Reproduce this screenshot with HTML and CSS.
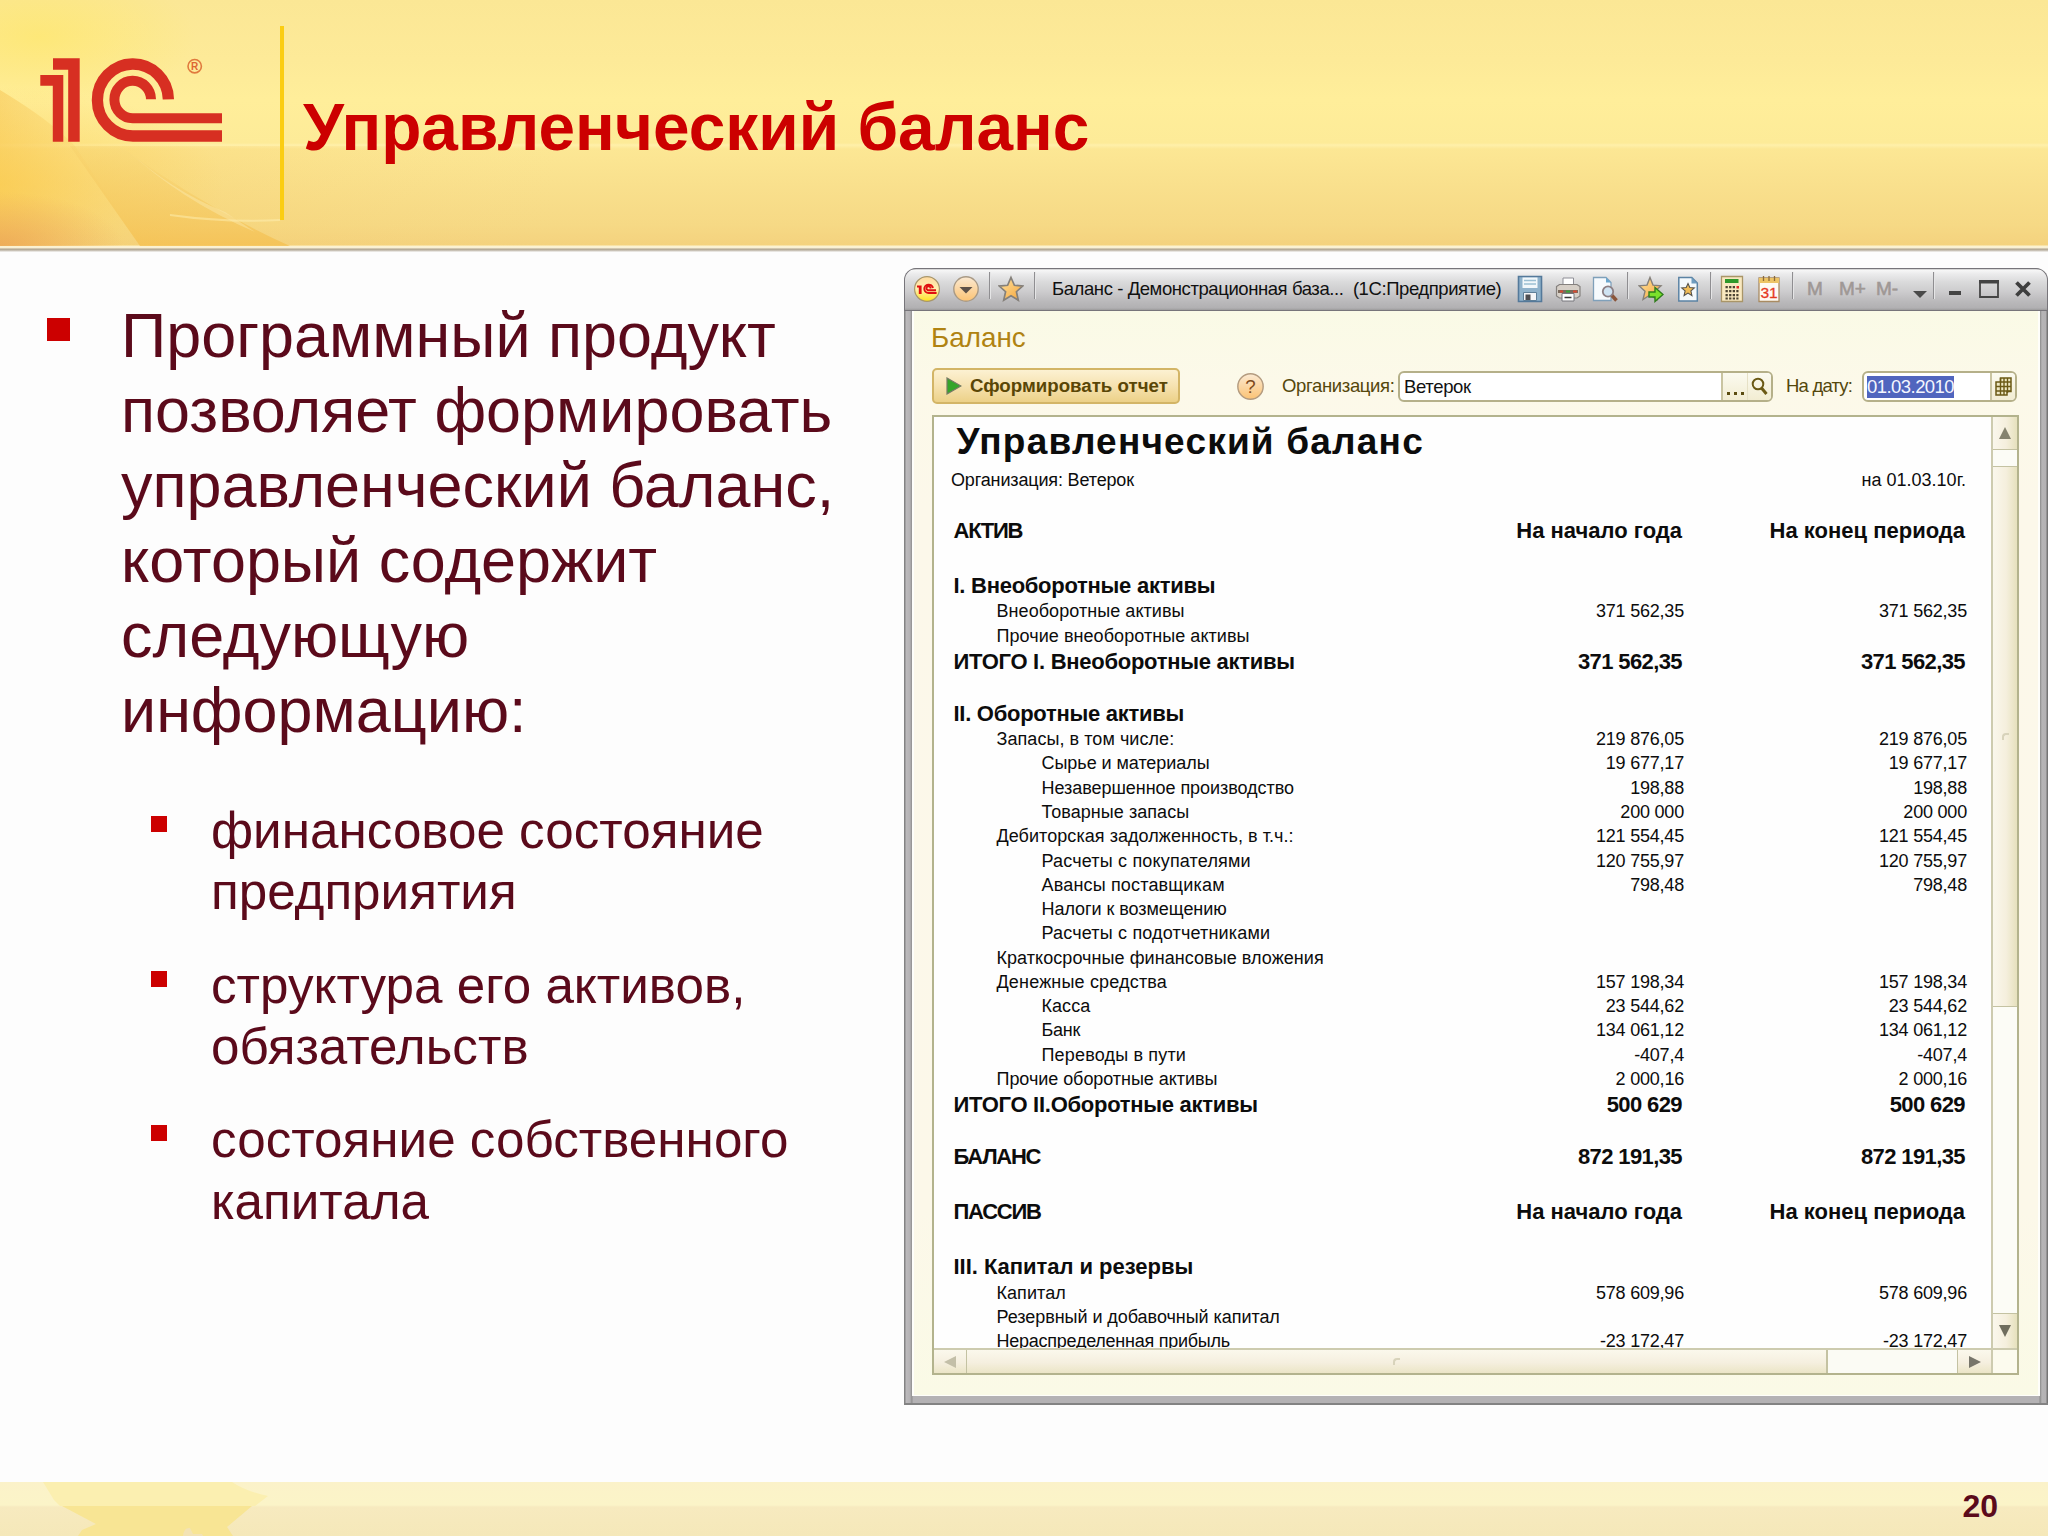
FILE: index.html
```html
<!DOCTYPE html>
<html lang="ru">
<head>
<meta charset="utf-8">
<title>Управленческий баланс</title>
<link rel="stylesheet" href="styles.css">
</head>
<body>
<div class="slide">
  <header class="slide-header">
    <svg class="header-art" viewBox="0 0 560 246" preserveAspectRatio="none">
      <defs>
        <linearGradient id="fade" x1="0" x2="1" y1="0" y2="0"><stop offset="0" stop-color="#f7c95c" stop-opacity=".6"/><stop offset="1" stop-color="#f7d681" stop-opacity="0"/></linearGradient>
        <linearGradient id="beam" x1="0" x2="0" y1="0" y2="1"><stop offset="0" stop-color="#f4cd68" stop-opacity=".3"/><stop offset="1" stop-color="#f5bf4d" stop-opacity=".75"/></linearGradient>
        <radialGradient id="glow" cx="0" cy=".75" r=".4"><stop offset="0" stop-color="#fccb48" stop-opacity=".6"/><stop offset="1" stop-color="#fccb48" stop-opacity="0"/></radialGradient>
        <radialGradient id="corner" cx="0" cy="1" r=".22"><stop offset="0" stop-color="#ea9f54" stop-opacity=".7"/><stop offset="1" stop-color="#ea9f54" stop-opacity="0"/></radialGradient>
        <radialGradient id="sun" cx=".07" cy=".15" r=".28"><stop offset="0" stop-color="#ffe760" stop-opacity=".55"/><stop offset="1" stop-color="#ffe760" stop-opacity="0"/></radialGradient>
      </defs>
      <rect width="560" height="246" fill="url(#sun)"/>
      <path d="M0 90 Q50 120 75 146 L140 246 H0z" fill="url(#fade)"/>
      <rect width="560" height="246" fill="url(#glow)"/>
      <path d="M70 146 H120 Q200 205 290 246 H140z" fill="url(#beam)"/>
      <path d="M120 146 H560 V246 H290 Q200 205 120 146z" fill="url(#fade)" opacity=".45"/>
      <path d="M125 148 Q180 200 255 232 L225 212 Q170 190 125 148z" fill="#fdeeb4" opacity=".4"/>
      <path d="M170 214 Q230 222 280 219 V221 Q225 224 170 216z" fill="#fff3bb" opacity=".45"/>
      <rect width="560" height="246" fill="url(#corner)"/>
    </svg>
    <svg class="logo" viewBox="40 57 184 86">
      <path d="M53 58.2h26.7v83.6H68.2V69.8H53z M40.3 75h23v66.8H52.8V85.8H40.3z" fill="#d72f22"/>
      <path d="M168.4 99.3A35.5 36 0 1 0 132.9 136H222" fill="none" stroke="#d72f22" stroke-width="11.3"/>
      <path d="M151 99.3A18.3 18.7 0 1 0 132.9 118.2H222" fill="none" stroke="#d72f22" stroke-width="10"/>
      <circle cx="194.7" cy="66.2" r="6.7" fill="none" stroke="#e07a3e" stroke-width="1.6"/>
      <text x="194.7" y="69.8" font-size="10" font-weight="700" text-anchor="middle" fill="#de6534">R</text>
    </svg>
    <div class="header-rule"></div>
    <h1 class="slide-title">Управленческий баланс</h1>
  </header>

  <main class="slide-body">
    <section class="bullets">
      <div class="bullet main">
        <span class="mark"></span>
        <p>Программный продукт<br>позволяет формировать<br>управленческий баланс,<br>который содержит<br>следующую<br>информацию:</p>
      </div>
      <div class="bullet sub"><span class="mark"></span><p>финансовое состояние<br>предприятия</p></div>
      <div class="bullet sub"><span class="mark"></span><p>структура его активов,<br>обязательств</p></div>
      <div class="bullet sub"><span class="mark"></span><p>состояние собственного<br>капитала</p></div>
    </section>

    <section class="window">
      <div class="titlebar">
        <svg class="ic i-app" viewBox="0 0 26 28"><defs><linearGradient id="yb" x1="0" x2="0" y1="0" y2="1"><stop offset="0" stop-color="#ffd9a0"/><stop offset=".5" stop-color="#fff0b0"/><stop offset="1" stop-color="#ffe11c"/></linearGradient><linearGradient id="ob" x1="0" x2="0" y1="0" y2="1"><stop offset="0" stop-color="#fbe9d2"/><stop offset="1" stop-color="#fbc374"/></linearGradient><linearGradient id="st" x1="0" x2="1" y1="0" y2="1"><stop offset="0" stop-color="#ffe3a0"/><stop offset="1" stop-color="#f6a53a"/></linearGradient></defs>
          <circle cx="13" cy="14" r="12.4" fill="url(#yb)" stroke="#a8966c" stroke-width="1.2"/>
          <path d="M3 10.500h4.600v8.500H4.800V12.500H3z" fill="#e01010"/><path d="M19 13a4.400 4.200 0 1 0-4.400 5h8M16.500 13.500a2 2 0 1 0-2 1.800h7.500" fill="none" stroke="#e01010" stroke-width="1.900"/></svg>
        <svg class="ic i-menu" viewBox="0 0 26 28"><circle cx="13" cy="14" r="12.2" fill="url(#ob)" stroke="#a99a86" stroke-width="1.4"/><path d="M6.500 12h13L13 18.500z" fill="#5d5148"/></svg>
        <i class="sep s1"></i>
        <svg class="ic i-star" viewBox="0 0 26 28"><path d="M13 2.500l3.400 7.800 8.300.8-6.300 5.600 1.900 8.600-7.300-4.500-7.300 4.500 1.900-8.600L1.300 11.100l8.300-.8z" fill="url(#st)" stroke="#85807a" stroke-width="1.700"/></svg>
        <i class="sep s2"></i>
        <span class="caption">Баланс - Демонстрационная база...&nbsp; (1С:Предприятие)</span>
        <svg class="ic i-save" viewBox="0 0 26 28"><path d="M1.500 1.500h23v25h-23z" fill="#8fb2cb" stroke="#54799a" stroke-width="1.600"/><path d="M5.500 2.500h15v10.500h-15z" fill="#f2f8fb"/><path d="M7 5.500h12M7 9h12" stroke="#9cc0d4" stroke-width="1.300"/><path d="M6.500 17.500h13v8h-13z" fill="#f4f6f8" stroke="#5f7f98"/><path d="M8.500 19.500h5v5.500h-5z" fill="#4e4e52"/></svg>
        <svg class="ic i-print" viewBox="0 0 26 28"><path d="M8 3h10.500v9H8z" fill="#fff" stroke="#8e8e96"/><path d="M1.500 11.500l3-2H22l3 2v9.500l-3 2H4.500l-3-2z" fill="#d6cfc7" stroke="#85817e" stroke-width="1.200"/><path d="M3 15h20v3H3z" fill="#7c6a5d"/><path d="M5 16.500h3M18 16.500h4" stroke="#d84b32" stroke-width="2"/><path d="M11 16.500h4" stroke="#3aa53a" stroke-width="2"/><path d="M7 18.500h12v7.500H7z" fill="#fff" stroke="#77777d"/><path d="M9.500 22.500h7" stroke="#3a3a3a" stroke-width="1.600"/></svg>
        <svg class="ic i-preview" viewBox="0 0 26 28"><path d="M1.500 2.500H14l5 5v18H1.500z" fill="#f6fafd" stroke="#7fa0ba" stroke-width="1.300"/><path d="M14 2.500v5h5z" fill="#6aa6ce"/><path d="M19.500 20l5 5.500" stroke="#8a553a" stroke-width="3.600"/><circle cx="16" cy="16.500" r="5.200" fill="#cfe3f2" stroke="#8c7f84" stroke-width="1.800"/></svg>
        <i class="sep s3"></i>
        <svg class="ic i-addfav" viewBox="0 0 26 28"><path d="M12 2.500l3 7.600 8 .7-6 5.500 2 8.200-7-4.500L5 24.500l2-8.200L1 10.800l8-.7z" fill="url(#st)" stroke="#85807a" stroke-width="1.400"/><path d="M11 17h6v-4.500l8 7-8 7V22h-6z" fill="#7be02c" stroke="#2f7d1c" stroke-width="1.400"/></svg>
        <svg class="ic i-favdoc" viewBox="0 0 26 28"><path d="M3.800 2.500h13l5.500 5.500v18H3.800z" fill="#f4f9fc" stroke="#5b83a4" stroke-width="1.500"/><path d="M16.500 2.500v6h6z" fill="#6f9dc0"/><path d="M13 8.500l1.800 4 4.500.4-3.400 3 1 4.600-3.900-2.400-3.900 2.400 1-4.600-3.400-3 4.500-.4z" fill="#f1bd58" stroke="#57534c" stroke-width="1.100"/></svg>
        <i class="sep s4"></i>
        <svg class="ic i-calc" viewBox="0 0 26 28"><path d="M2.500 1.500h21v25h-21z" fill="#f9e9c0" stroke="#a99568" stroke-width="1.300"/><path d="M6 4h13.500v4H6z" fill="#2f982a"/><path d="M6.500 12.200h10M6.500 16.200h13M6.500 20.200h13M6.500 23.500h13" stroke="#4c4433" stroke-width="2.200" stroke-dasharray="2.300 1.300"/><path d="M17.500 12.200h2.500" stroke="#e02828" stroke-width="2.600"/></svg>
        <svg class="ic i-cal" viewBox="0 0 26 28"><path d="M3 3h20v23.500H3z" fill="#fffaf2" stroke="#a98b62" stroke-width="1.300"/><path d="M3 3h20v5H3z" fill="#edc465"/><path d="M7.500 1v5M13 1v5M18.500 1v5" stroke="#8c6a38" stroke-width="1.300"/><text x="13" y="23" font-size="15.500" text-anchor="middle" fill="#e5391f" stroke="#e5391f" stroke-width=".3">31</text></svg>
        <i class="sep s5"></i>
        <span class="mem m0">M</span><span class="mem m1">M+</span><span class="mem m2">M-</span>
        <svg class="i-drop" viewBox="0 0 14 7"><path d="M0 0h14L7 7z" fill="#4a4a4a"/></svg>
        <i class="sep s6"></i>
        <svg class="i-min" viewBox="0 0 12 4"><path d="M0 0h12v4H0z" fill="#444"/></svg>
        <svg class="i-max" viewBox="0 0 20 18"><path d="M1 2.200h18V17H1z" fill="none" stroke="#444" stroke-width="1.800"/><path d="M0 0h20v3.500H0z" fill="#444"/></svg>
        <svg class="i-close" viewBox="0 0 16 16"><path d="M1.500 1.500l13 13M14.500 1.500l-13 13" stroke="#3e3e3e" stroke-width="3.800"/></svg>
      </div>

      <div class="content">
        <h2 class="form-title">Баланс</h2>
        <div class="toolbar">
          <button class="run"><svg viewBox="0 0 16 18"><path d="M1 1l14 8-14 8z" fill="#35a52a" stroke="#777a66" stroke-width="1.200"/></svg><span>Сформировать отчет</span></button>
          <svg class="help" viewBox="0 0 26 26"><circle cx="13" cy="13" r="12.200" fill="url(#ob)" stroke="#b49c80" stroke-width="1.400"/><text x="13" y="19.500" font-size="18" text-anchor="middle" fill="#7d4a1c">?</text></svg>
          <label class="lbl-org">Организация:</label>
          <div class="field org"><span class="value">Ветерок</span><span class="btn dots"><i></i><i></i><i></i></span><span class="btn mag"><svg viewBox="0 0 17 19"><circle cx="7" cy="7" r="5.300" fill="none" stroke="#6b5a16" stroke-width="2"/><path d="M10.500 11l5 6" stroke="#6b5a16" stroke-width="3"/></svg></span></div>
          <label class="lbl-date">На дату:</label>
          <div class="field date"><span class="value"><mark>01.03.2010</mark></span><span class="btn grid"><svg viewBox="0 0 17 19"><path d="M5.500 1H16v13.500h-4V18H1V5h4.500z" fill="#efe9c4" stroke="#6b5a16" stroke-width="1.500"/><path d="M5.500 5H16M1 9.500h15M1 14h15M5.500 1v17M9 1v17M12.500 1v15" stroke="#6b5a16" stroke-width="1.400"/></svg></span></div>
        </div>

        <div class="report">
          <div class="sheet">
            <h3>Управленческий баланс</h3>
            <div class="meta"><span class="m-org">Организация: Ветерок</span><span>на 01.03.10г.</span></div>
            <div class="row header top"><span class="caps">АКТИВ</span><b>На начало года</b><b>На конец периода</b></div>
            <div class="row header"><span>I. Внеоборотные активы</span></div>
            <div class="row l1 first"><span>Внеоборотные активы</span><b>371 562,35</b><b>371 562,35</b></div>
            <div class="row l1"><span>Прочие внеоборотные активы</span></div>
            <div class="row total"><span>ИТОГО I. Внеоборотные активы</span><b>371 562,35</b><b>371 562,35</b></div>
            <div class="row section"><span>II. Оборотные активы</span></div>
            <div class="row l1 first"><span>Запасы, в том числе:</span><b>219 876,05</b><b>219 876,05</b></div>
            <div class="row l2"><span class="snug">Сырье и материалы</span><b>19 677,17</b><b>19 677,17</b></div>
            <div class="row l2"><span class="snug">Незавершенное производство</span><b>198,88</b><b>198,88</b></div>
            <div class="row l2"><span>Товарные запасы</span><b>200 000</b><b>200 000</b></div>
            <div class="row l1"><span>Дебиторская задолженность, в т.ч.:</span><b>121 554,45</b><b>121 554,45</b></div>
            <div class="row l2"><span class="wide">Расчеты с покупателями</span><b>120 755,97</b><b>120 755,97</b></div>
            <div class="row l2"><span class="wide">Авансы поставщикам</span><b>798,48</b><b>798,48</b></div>
            <div class="row l2"><span class="snug">Налоги к возмещению</span></div>
            <div class="row l2"><span class="wide">Расчеты с подотчетниками</span></div>
            <div class="row l1"><span>Краткосрочные финансовые вложения</span></div>
            <div class="row l1"><span class="wide">Денежные средства</span><b>157 198,34</b><b>157 198,34</b></div>
            <div class="row l2"><span>Касса</span><b>23 544,62</b><b>23 544,62</b></div>
            <div class="row l2"><span class="tight">Банк</span><b>134 061,12</b><b>134 061,12</b></div>
            <div class="row l2"><span class="wide">Переводы в пути</span><b>-407,4</b><b>-407,4</b></div>
            <div class="row l1"><span class="snug">Прочие оборотные активы</span><b>2 000,16</b><b>2 000,16</b></div>
            <div class="row total"><span>ИТОГО II.Оборотные активы</span><b>500 629</b><b>500 629</b></div>
            <div class="row section total"><span class="caps">БАЛАНС</span><b>872 191,35</b><b>872 191,35</b></div>
            <div class="row header"><span class="caps">ПАССИВ</span><b>На начало года</b><b>На конец периода</b></div>
            <div class="row header"><span class="wide">III. Капитал и резервы</span></div>
            <div class="row l1 first"><span>Капитал</span><b>578 609,96</b><b>578 609,96</b></div>
            <div class="row l1"><span class="snug">Резервный и добавочный капитал</span></div>
            <div class="row l1"><span class="tight">Нераспределенная прибыль</span><b>-23 172,47</b><b>-23 172,47</b></div>
          </div>
          <div class="vscroll">
            <span class="up"><svg viewBox="0 0 12 12"><path d="M6 0l6 12H0z" fill="#85836f"/></svg></span>
            <span class="vgap"></span>
            <span class="vthumb"><i></i></span>
            <span class="vtrack"></span>
            <span class="down"><svg viewBox="0 0 12 12"><path d="M6 12l6-12H0z" fill="#6f6d5e"/></svg></span>
          </div>
          <div class="hscroll">
            <span class="left"><svg viewBox="0 0 12 12"><path d="M0 6l12-6v12z" fill="#c3bfa8"/></svg></span>
            <span class="hthumb"><i></i></span>
            <span class="htrack"></span>
            <span class="right"><svg viewBox="0 0 12 12"><path d="M12 6L0 0v12z" fill="#77756a"/></svg></span>
          </div>
          <div class="scroll-corner"></div>
        </div>
      </div>
    </section>
  </main>

  <footer class="slide-footer">
    <svg class="footer-art" viewBox="0 0 560 54">
      <path d="M43 0H232Q245 9 268 14L255 24H60L54 18z" fill="#fbefb0"/>
      <path d="M62 24H252L227 45L233 54H78L82 48L96 42z" fill="#f8e594"/>
      <path d="M183 54Q184 45 190 46L193 52H202L203 54z" fill="#f3e3b4"/>
    </svg>
    <span class="page-no">20</span>
  </footer>
</div>
</body>
</html>
```
FILE: styles.css
```css
* { box-sizing: border-box; }
body { margin: 0; background: #fdfdfd; font-family: "Liberation Sans", Arial, sans-serif; }
h1, h2, h3, p { margin: 0; }
svg { display: block; flex: none; }
.slide { width: 2048px; height: 1536px; display: flex; flex-direction: column; overflow: hidden; }

/* header band */
.slide-header {
  position: relative; flex: none; height: 252px; display: flex; align-items: flex-start;
  background: linear-gradient(#fbe795 0, #fdea98 60px, #ffee9a 100px, #fdeb98 143px, #fff0aa 145px, #fce794 149px, #f9e08d 185px, #f6d985 225px, #f4d27e 245px, #fdf3cf 246px, #f8efd6 248px, #aca089 249px, #d2cdc4 251px, #fdfdfd 252px);
}
.header-art { position: absolute; left: 0; top: 0; width: 560px; height: 246px; }
.logo { position: relative; width: 184px; height: 86px; margin: 57px 0 0 40px; }
.header-rule { position: relative; width: 4px; height: 194px; margin: 26px 0 0 56px; background: #fbcd12; }
.slide-title { position: relative; margin: 89px 0 0 19px; font-size: 65.8px; line-height: 76px; color: #c00; white-space: nowrap; }

/* body */
.slide-body { flex: 1; min-height: 0; display: flex; align-items: flex-start; }
.bullets { width: 904px; flex: none; padding-top: 46px; color: #5b0a1b; }
.bullet { display: flex; align-items: flex-start; }
.bullet p { white-space: nowrap; }
.mark { background: #c00; flex: none; }
.main { padding-left: 47px; margin-bottom: 51.3px; }
.main .mark { width: 23px; height: 23px; margin: 20px 51px 0 0; }
.main p { font-size: 62.9px; line-height: 75.1px; }
.sub { padding-left: 151px; margin-bottom: 31.7px; }
.sub .mark { width: 16px; height: 16px; margin: 16px 44px 0 0; }
.sub p { font-size: 51.2px; line-height: 61.5px; }

/* application window */
.window {
  flex: none; width: 1144px; height: 1137px; margin-top: 16px; display: flex; flex-direction: column;
  border-radius: 12px 12px 0 0; overflow: hidden; padding: 0 8px 9px;
  background: linear-gradient(90deg, #838383 0, #838383 1px, #bcbabc 2px, #b4b2b4 6px, #8f8e8e 8px, #b4b2b4 9px, #b4b2b4 1135px, #8b8b8b 1136px, #b6b5b6 1138px, #b3b1b3 1142px, #757575 1143px);
  box-shadow: inset 0 -2px 0 #838383;
}
.titlebar {
  flex: none; height: 43px; margin: 0 -8px; padding-bottom: 2px; display: flex; align-items: center;
  border-radius: 12px 12px 0 0; box-shadow: inset 0 0 0 1px #77757a;
  background: linear-gradient(#757575 0, #f7f7f7 2px, #ebebec 6px, #dadadb 14px, #cccbcd 24px, #bbbabc 33px, #b1b0b2 40px, #929191 43px);
}
.ic { width: 26px; height: 28px; }
.i-app { margin-left: 10px; }
.i-menu { margin-left: 13px; }
.i-star { margin-left: 7px; }
.i-save { margin-left: 9px; }
.i-print { margin-left: 12px; }
.i-preview { margin-left: 11px; }
.i-addfav { margin-left: 9px; }
.i-favdoc { margin-left: 11px; }
.i-calc { margin-left: 7px; }
.i-cal { margin-left: 11px; }
.sep { width: 2px; height: 27px; flex: none; background: linear-gradient(90deg, #8f8e91 50%, #e5e5e6 50%); margin-bottom: 7px; }
.s1, .s2, .s5 { margin-left: 10px; }
.s3, .s4 { margin-left: 9px; }
.s6 { margin-left: 6px; }
.caption { width: 456px; margin-left: 16px; font-size: 18.5px; letter-spacing: -.42px; line-height: 24px; white-space: nowrap; color: #111; }
.mem { font-size: 19px; line-height: 24px; color: #9f9895; -webkit-text-stroke: .6px #9f9895; }
.m0 { width: 16px; margin-left: 13px; }
.m1 { width: 28px; margin-left: 16px; }
.m2 { width: 28px; margin-left: 9px; }
.i-drop { width: 14px; height: 7px; margin: 12px 0 0 9px; }
.i-min { width: 12px; height: 4px; margin: 9px 0 0 14px; }
.i-max { width: 20px; height: 18px; margin-left: 18px; }
.i-close { width: 16px; height: 16px; margin-left: 16px; }

.content {
  flex: 1; min-height: 0; display: flex; flex-direction: column; padding: 10px 21px 21px 20px;
  background: linear-gradient(#fafae6 0, #fcf9e9 70px, #fcf8ea 200px, #fcf8e9 900px, #fafae6 1085px);
  box-shadow: inset 2px 0 0 #fefefa, inset -2px -1px 0 #fefefa;
}
.form-title { font-size: 27.8px; line-height: 32px; font-weight: 400; color: #b08312; margin-left: -1px; position: relative; top: 1px; }
.toolbar { display: flex; align-items: center; height: 36px; margin: 15px 0 11px; color: #54470c; font-size: 18.5px; white-space: nowrap; }
.run {
  width: 248px; height: 36px; flex: none; display: flex; align-items: center; padding: 0 0 0 12px; gap: 8px;
  border: 2px solid #d3b566; border-radius: 5px; font: 700 18.7px "Liberation Sans", Arial, sans-serif; color: #5a4606; white-space: nowrap;
  background: linear-gradient(#fcf1d2, #f6e2b0 50%, #ecd188);
}
.run svg { width: 16px; height: 18px; }
.help { width: 27px; height: 27px; margin-left: 57px; }
.lbl-org { width: 116px; margin-left: 18px; letter-spacing: -.35px; }
.lbl-date { width: 76px; margin-left: 13px; letter-spacing: -.8px; }
.field { height: 31px; flex: none; display: flex; border: 2px solid #b5b089; border-radius: 6px; background: #fff; overflow: hidden; margin-top: 1px; }
.org { width: 375px; }
.date { width: 155px; }
.value { flex: 1; padding-left: 4px; line-height: 28px; letter-spacing: -.35px; color: #111; }
.date .value { padding: 2.500px 0 0 3px; line-height: 22px; }
mark { display: inline-block; height: 22px; background: #5065be; color: #f4f6ff; letter-spacing: -.55px; }
.btn { display: flex; align-items: center; justify-content: center; background: linear-gradient(#fbfaf0, #f2edd2); }
.dots { width: 26px; gap: 4px; align-items: flex-end; padding-bottom: 5px; border-left: 2px solid #c9c4a1; }
.dots i { width: 3px; height: 3px; background: #5b4c10; }
.mag { width: 24px; border-left: 1px solid #e6e1c6; }
.grid { width: 25px; border-left: 2px solid #c9c4a1; }
.btn svg { width: 17px; height: 19px; }

/* report sheet */
.report { flex: 1; min-height: 0; display: grid; grid-template: minmax(0, 1fr) 25px / minmax(0, 1fr) 26px; border: 2px solid #b3b38d; background: #fefefe; }
.sheet { overflow: hidden; padding: 4px 24px 0 19.5px; color: #0c0c0c; font-size: 18px; line-height: 24px; white-space: nowrap; }
.sheet h3 { font-size: 37px; line-height: 42px; letter-spacing: 1.2px; padding-left: 3px; }
.meta { display: flex; justify-content: space-between; margin: 4.600px 1px 0 -2.500px; }
.m-org { letter-spacing: -.15px; }
.row { display: grid; grid-template-columns: 449px 1fr 283px; align-items: end; height: 24.27px; letter-spacing: .06px; }
.row b { font-weight: 400; text-align: right; letter-spacing: -.2px; }
.l1 span { padding-left: 43px; }
.l2 span { padding-left: 88px; }
.header, .total, .section { font-size: 22px; font-weight: 700; letter-spacing: -.27px; }
.header b, .total b { font-weight: 700; letter-spacing: 0; padding-right: 2px; }
.total b { letter-spacing: -.6px; }
.first { height: 25.7px; }
.total { height: 26.3px; }
.section { height: 51.7px; }
.header { height: 55px; }
.top { height: 51px; }
.caps { letter-spacing: -1.25px; }
.tight { letter-spacing: -.25px; }
.snug { letter-spacing: -.05px; }
.wide { letter-spacing: .17px; }
.header .wide { letter-spacing: -.03px; }

/* scrollbars */
.vscroll { display: flex; flex-direction: column; border-left: 2px solid #cdcbaf; background: #fcfcf6; }
.vscroll span, .hscroll span { display: flex; align-items: center; justify-content: center; }
.vscroll svg, .hscroll svg { width: 12px; height: 12px; }
.up, .vthumb, .down { background: linear-gradient(90deg, #faf7ec, #f5efdd 55%, #e6e1bd); }
.up { height: 33px; border-bottom: 1px solid #c4c2a2; }
.vgap { height: 16px; }
.vthumb { height: 541px; border: solid #c4c2a2; border-width: 1px 0; }
.vthumb i, .hthumb i { width: 7px; height: 7px; border: 2px solid #d8d3bb; border-right: 0; border-bottom: 0; border-radius: 4px 0 0; }
.vtrack { flex: 1; }
.down { height: 35px; border-top: 1px solid #c4c2a2; }
.hscroll { display: flex; border-top: 2px solid #cdcbaf; background: #fbfbf4; }
.left, .hthumb, .right { background: linear-gradient(#fbf8ec, #f5efdf 55%, #ebe5c6); }
.left { width: 33px; border-right: 1px solid #c4c2a2; }
.hthumb { width: 861px; border-right: 2px solid #c4c2a2; }
.htrack { flex: 1; }
.right { width: 34px; border-left: 1px solid #c4c2a2; }
.scroll-corner { border: solid #cdcbaf; border-width: 2px 0 0 2px; background: #fcfbee; }

/* footer band */
.slide-footer {
  position: relative; flex: none; height: 54px; display: flex; justify-content: flex-end; padding: 6px 50px 0 0;
  background: linear-gradient(#fbf2c9 0, #fbf4c8 23px, #f7eabf 25px, #f5e8b9 54px);
}
.footer-art { position: absolute; left: 0; top: 0; width: 560px; height: 54px; }
.page-no { font-size: 32px; line-height: 36px; font-weight: 700; color: #5b0a1b; }
```
